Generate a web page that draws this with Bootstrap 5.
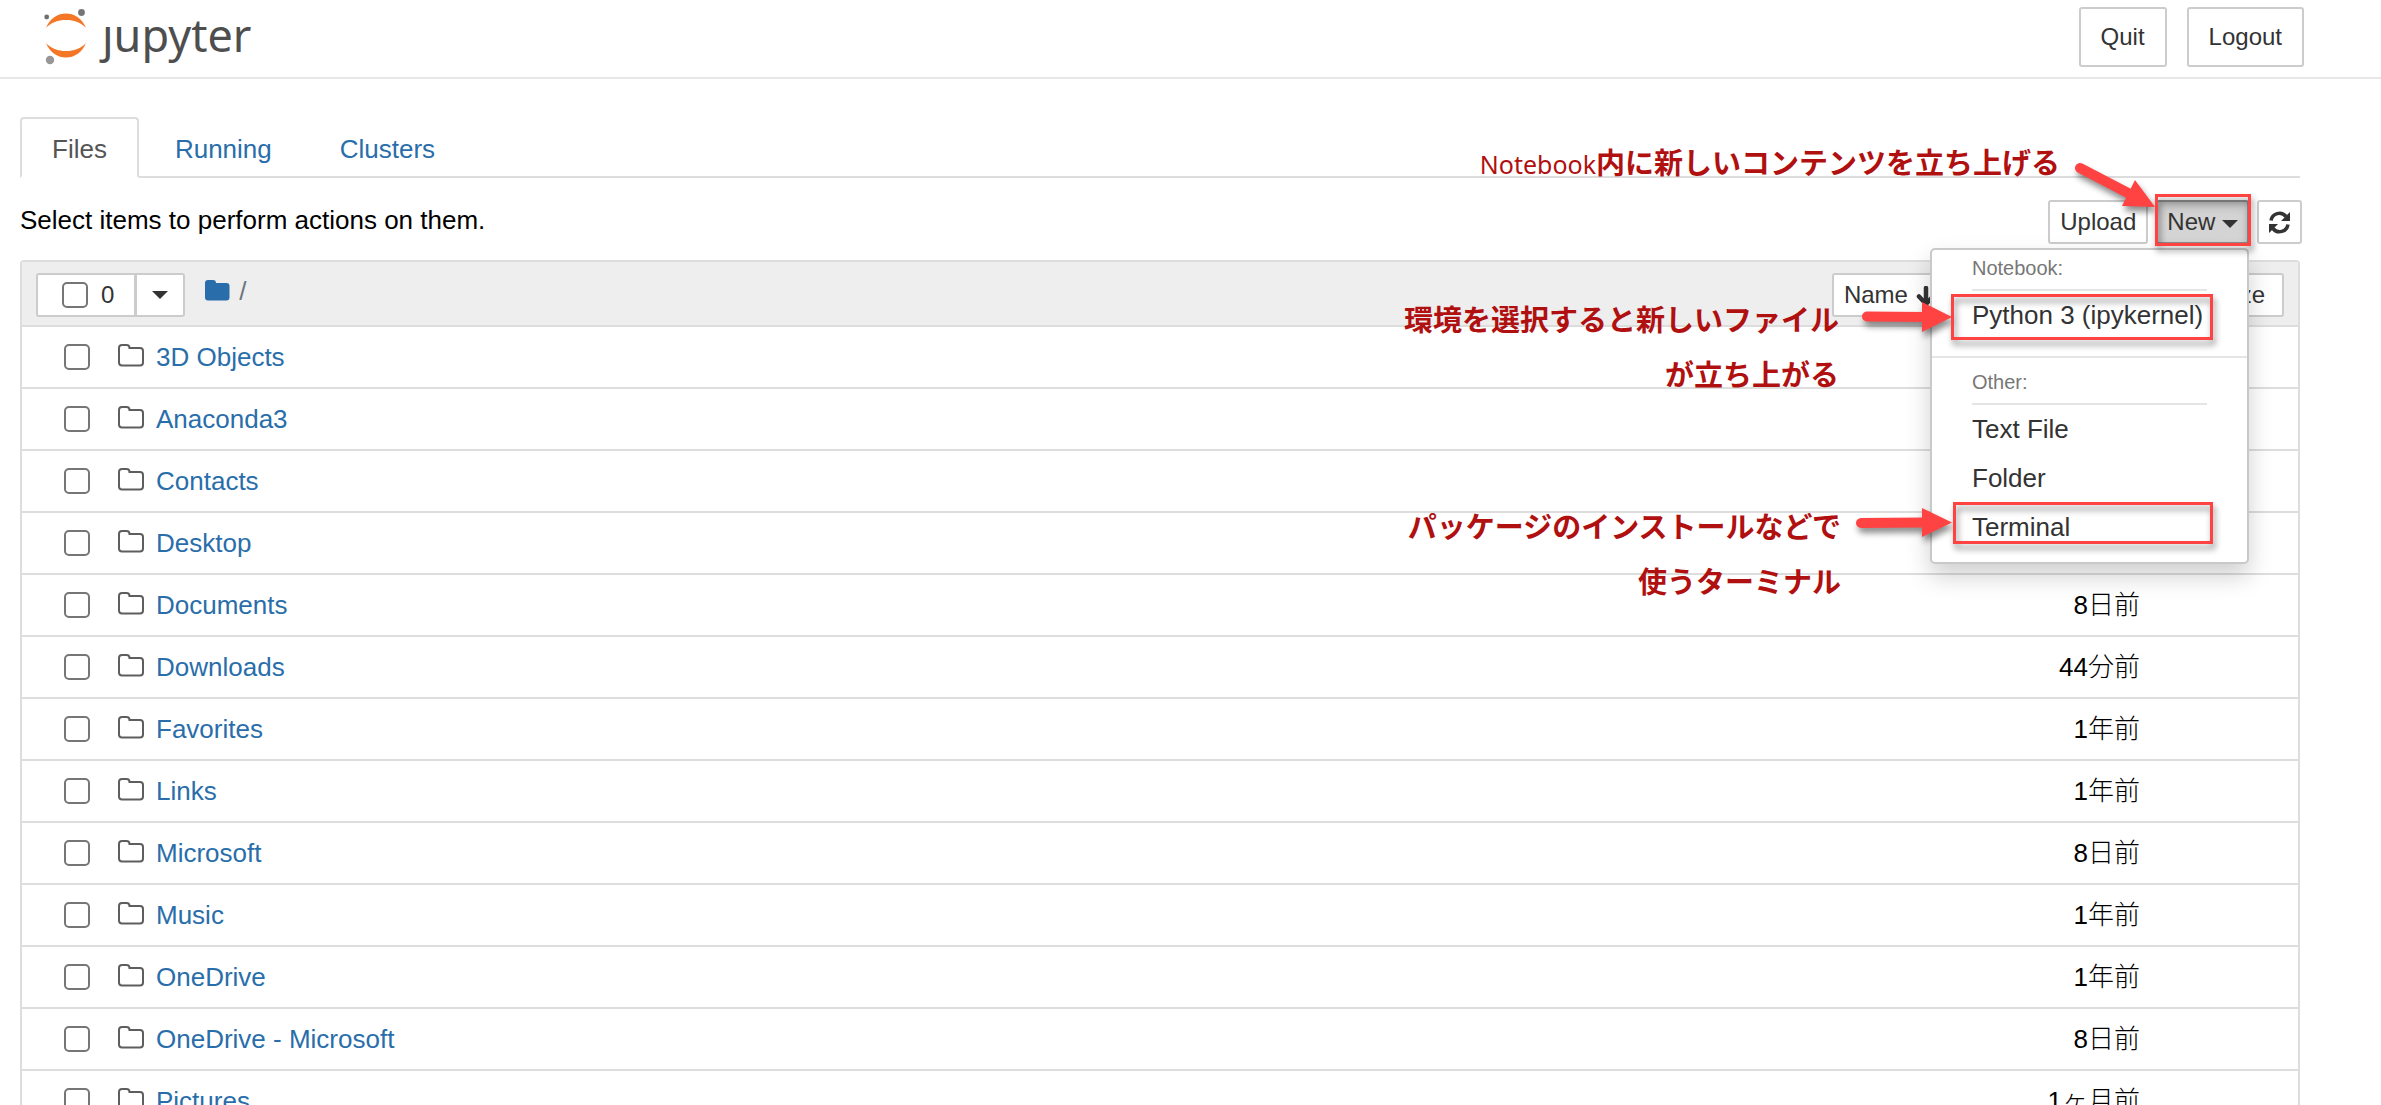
<!DOCTYPE html>
<html lang="ja">
<head>
<meta charset="utf-8">
<meta name="viewport" content="width=device-width, initial-scale=1">
<title>Home Page - Jupyter</title>
<link href="https://cdn.jsdelivr.net/npm/bootstrap@5.3.0/dist/css/bootstrap.min.css" rel="stylesheet">
<style>
  body { font: 26px/36px "Liberation Sans", "Noto Sans CJK JP", sans-serif; color: #000; background: #fff; height: 100vh; overflow: hidden; }
  a { color: #296eaa; text-decoration: none; }
  .site-head { padding: 7px 77px 10px 42px; border-bottom: 2px solid #e7e7e7; }
  .logo-word { font: 45px/56px "Noto Sans", sans-serif; color: #4e4e4e; margin-left: 2px; }
  .btn { --bs-btn-font-size: 24px; --bs-btn-line-height: 34px; --bs-btn-padding-x: 10px; --bs-btn-padding-y: 3px; --bs-btn-border-width: 2px; --bs-btn-border-radius: 3px;
    --bs-btn-color: #333; --bs-btn-bg: #fff; --bs-btn-border-color: #ccc; --bs-btn-hover-bg: #e6e6e6; --bs-btn-hover-border-color: #adadad; }
  .btn-head { --bs-btn-padding-x: 20px; --bs-btn-padding-y: 11px; }
  .btn-size { --bs-btn-padding-x: 17px; }
  .btn-open { --bs-btn-padding-x: 9px; --bs-btn-bg: #d4d4d4; --bs-btn-border-color: #8c8c8c; box-shadow: inset 0 6px 10px rgba(0,0,0,.125); }
  .btn-count { padding-left: 24px; padding-right: 20px; gap: 13px; }
  .btn-more { --bs-btn-padding-x: 15px; }
  .caret-mark { display: inline-block; border: 8px solid transparent; border-top-color: currentColor; border-bottom: 0; vertical-align: middle; }
  .page-main { padding: 38px 81px 0 20px; }
  .nav-tabs { --bs-nav-tabs-border-width: 2px; --bs-nav-tabs-border-color: #ddd; --bs-nav-tabs-border-radius: 4px; --bs-nav-link-padding-x: 30px; --bs-nav-link-color: #296eaa;
    --bs-nav-tabs-link-active-color: #555; --bs-nav-tabs-link-active-border-color: #ddd #ddd #fff; gap: 4px; }
  .nav-tabs .nav-link { padding-top: 12px; padding-bottom: 9px; }
  .tools { padding-top: 22px; margin-right: -2px; }
  .hint { padding-top: 2px; }
  .file-list { margin-top: 16px; border: 2px solid #ddd; border-radius: 4px; }
  .list-head { background: #eee; padding: 11px 14px 8px; border-bottom: 2px solid #ddd; }
  .file-row { padding: 12px 0 12px 42px; border-bottom: 2px solid #ddd; }
  .tick { appearance: none; width: 26px; height: 26px; border: 2px solid #767676; border-radius: 5px; background: #fff; margin: 0; flex: none; }
  .file-row .tick { margin-right: 28px; }
  .file-row svg { width: 26px; height: 24px; margin-right: 12px; margin-top: -5px; }
  .file-row span { font-weight: 300; }
  .size-col { width: 158px; }
  .name-sort { margin-right: 78px; }
  .new-menu { --bs-dropdown-font-size: 26px; --bs-dropdown-border-width: 2px; --bs-dropdown-border-radius: 5px; --bs-dropdown-border-color: #c9c9c9; --bs-dropdown-padding-y: 0;
    --bs-dropdown-item-padding-x: 40px; --bs-dropdown-item-padding-y: 6px; --bs-dropdown-link-color: #333; top: 100%; right: 0; width: 319px; margin-top: 4px; padding-bottom: 10px; box-shadow: 0 12px 24px rgba(0,0,0,.19); }
  .new-menu .dropdown-item { line-height: 37px; }
  .menu-label { font-size: 20px; line-height: 28px; color: #777; margin: 4px 40px 0; padding-bottom: 7px; border-bottom: 2px solid #e5e5e5; }
  .new-menu .dropdown-divider { margin: 16px 0 10px; border-top: 2px solid #e5e5e5; opacity: 1; }
  .note-layer { position: absolute; right: 81px; top: 0; width: 460px; height: 500px; z-index: 1100; pointer-events: none; filter: drop-shadow(2px 5px 3px rgba(0,0,0,.45)); }
  .note-text { position: absolute; z-index: 1100; margin: 0; text-align: right; white-space: nowrap; color: #b01010; font: 700 29px/55px "Noto Sans CJK JP", sans-serif; }
  .note-text span { font: 400 25px/55px "Noto Sans", sans-serif; }
  .note-new { right: 321px; top: 55px; }
  .note-env { right: 542px; top: 212px; }
  .note-term { right: 540px; top: 419px; }
</style>
<script src="https://cdn.jsdelivr.net/npm/bootstrap@5.3.0/dist/js/bootstrap.bundle.min.js"></script>
</head>
<body>
<svg class="d-none" aria-hidden="true">
  <symbol id="folder" viewBox="0 0 26 24"><path d="M1 5Q1 2 4 2H8.500Q11.500 2 11.500 5H22Q25 5 25 8V19.500Q25 22.500 22 22.500H4Q1 22.500 1 19.500Z" fill="none" stroke="#5e5e5e" stroke-width="2"/></symbol>
</svg>

<header class="site-head d-flex align-items-start">
  <a href="#" class="d-flex align-items-start me-auto" aria-label="jupyter">
    <svg width="58" height="60" viewBox="42 7 58 60" aria-hidden="true">
      <path d="M46 28C50 18 58 13.500 66 13.500S82 18 86 28C81 22.500 74 20 66 20S51 22.500 46 28Z" fill="#f37726"/>
      <path d="M46 43C50 53 58 57.500 66 57.500S82 53 86 43C81 48.500 74 51 66 51S51 48.500 46 43Z" fill="#f37726"/>
      <circle cx="81.500" cy="12.500" r="3.400" fill="#767677"/><circle cx="46.700" cy="17" r="2.400" fill="#6f6f70"/><circle cx="50" cy="60" r="4.200" fill="#989798"/>
    </svg>
    <span class="logo-word">ȷupyter</span>
  </a>
  <div class="d-flex">
    <button type="button" class="btn btn-head">Quit</button>
    <span class="ps-1 pe-3"></span>
    <button type="button" class="btn btn-head">Logout</button>
  </div>
</header>

<main class="page-main position-relative">
  <ul class="nav nav-tabs">
    <li class="nav-item"><a class="nav-link active" href="#">Files</a></li>
    <li class="nav-item"><a class="nav-link" href="#">Running</a></li>
    <li class="nav-item"><a class="nav-link" href="#">Clusters</a></li>
  </ul>

  <div class="tools d-flex align-items-start">
    <div class="me-auto hint">Select items to perform actions on them.</div>
    <div class="d-flex gap-2">
      <button type="button" class="btn">Upload</button>
      <div class="position-relative">
        <button type="button" class="btn btn-open" aria-expanded="true">New <span class="caret-mark"></span></button>
        <div class="dropdown-menu new-menu show">
          <div class="menu-label">Notebook:</div>
          <a class="dropdown-item" href="#">Python 3 (ipykernel)</a>
          <hr class="dropdown-divider">
          <div class="menu-label">Other:</div>
          <a class="dropdown-item" href="#">Text File</a>
          <a class="dropdown-item" href="#">Folder</a>
          <a class="dropdown-item" href="#">Terminal</a>
        </div>
      </div>
      <button type="button" class="btn" aria-label="Refresh">
        <svg class="d-block my-1" width="21" height="26" viewBox="0 0 21 26" aria-hidden="true"><g fill="none" stroke="#333" stroke-width="3.600"><path d="M2 11.500A8.500 8.500 0 0 1 17 7.500"/><path d="M19 15.500A8.500 8.500 0 0 1 4 19.500"/></g><path d="M21 3V12H12ZM0 24V15H9Z" fill="#333"/></svg>
      </button>
    </div>
  </div>

  <section class="file-list">
    <div class="list-head d-flex align-items-start">
      <div class="btn-group">
        <label class="btn btn-count d-flex align-items-center"><input class="tick" type="checkbox" aria-label="Select all"><span>0</span></label>
        <button type="button" class="btn btn-more" aria-label="Select menu"><span class="caret-mark d-block"></span></button>
      </div>
      <a href="#" class="ms-3 ps-1" aria-label="Home folder"><svg class="d-block mt-1" width="26" height="26" viewBox="0 0 26 26" aria-hidden="true"><path d="M0 6Q0 3 3 3H8Q11 3 11 6H21.500Q24.500 6 24.500 9V20.500Q24.500 23.500 21.500 23.500H3Q0 23.500 0 20.500Z" fill="#296eaa"/></svg></a>
      <span class="text-secondary ms-2">/</span>
      <button type="button" class="btn ms-auto name-sort">Name <svg width="20" height="22" viewBox="0 0 20 22" aria-hidden="true"><path d="M11 2V17M4 10.500L11 18L18 10.500" fill="none" stroke="#333" stroke-width="4.500" stroke-linecap="round"/></svg></button>
      <button type="button" class="btn me-2">Last Modified</button>
      <button type="button" class="btn btn-size">Size</button>
    </div>

    <div class="file-row d-flex align-items-center"><input class="tick" type="checkbox" aria-label="3D Objects"><svg><use href="#folder"/></svg><a href="#" class="me-auto">3D Objects</a></div>
    <div class="file-row d-flex align-items-center"><input class="tick" type="checkbox" aria-label="Anaconda3"><svg><use href="#folder"/></svg><a href="#" class="me-auto">Anaconda3</a></div>
    <div class="file-row d-flex align-items-center"><input class="tick" type="checkbox" aria-label="Contacts"><svg><use href="#folder"/></svg><a href="#" class="me-auto">Contacts</a></div>
    <div class="file-row d-flex align-items-center"><input class="tick" type="checkbox" aria-label="Desktop"><svg><use href="#folder"/></svg><a href="#" class="me-auto">Desktop</a></div>
    <div class="file-row d-flex align-items-center"><input class="tick" type="checkbox" aria-label="Documents"><svg><use href="#folder"/></svg><a href="#" class="me-auto">Documents</a><span>8日前</span><span class="size-col"></span></div>
    <div class="file-row d-flex align-items-center"><input class="tick" type="checkbox" aria-label="Downloads"><svg><use href="#folder"/></svg><a href="#" class="me-auto">Downloads</a><span>44分前</span><span class="size-col"></span></div>
    <div class="file-row d-flex align-items-center"><input class="tick" type="checkbox" aria-label="Favorites"><svg><use href="#folder"/></svg><a href="#" class="me-auto">Favorites</a><span>1年前</span><span class="size-col"></span></div>
    <div class="file-row d-flex align-items-center"><input class="tick" type="checkbox" aria-label="Links"><svg><use href="#folder"/></svg><a href="#" class="me-auto">Links</a><span>1年前</span><span class="size-col"></span></div>
    <div class="file-row d-flex align-items-center"><input class="tick" type="checkbox" aria-label="Microsoft"><svg><use href="#folder"/></svg><a href="#" class="me-auto">Microsoft</a><span>8日前</span><span class="size-col"></span></div>
    <div class="file-row d-flex align-items-center"><input class="tick" type="checkbox" aria-label="Music"><svg><use href="#folder"/></svg><a href="#" class="me-auto">Music</a><span>1年前</span><span class="size-col"></span></div>
    <div class="file-row d-flex align-items-center"><input class="tick" type="checkbox" aria-label="OneDrive"><svg><use href="#folder"/></svg><a href="#" class="me-auto">OneDrive</a><span>1年前</span><span class="size-col"></span></div>
    <div class="file-row d-flex align-items-center"><input class="tick" type="checkbox" aria-label="OneDrive - Microsoft"><svg><use href="#folder"/></svg><a href="#" class="me-auto">OneDrive - Microsoft</a><span>8日前</span><span class="size-col"></span></div>
    <div class="file-row d-flex align-items-center"><input class="tick" type="checkbox" aria-label="Pictures"><svg><use href="#folder"/></svg><a href="#" class="me-auto">Pictures</a><span>1ヶ月前</span><span class="size-col"></span></div>
  </section>

  <!-- call-outs: arrows and frames over the menu -->
  <svg class="note-layer" viewBox="1840 79 460 500" aria-hidden="true">
    <g stroke="#ff4242" fill="none">
      <g stroke-width="3"><rect x="2156.500" y="195.500" width="93" height="49"/><rect x="1952.500" y="295.500" width="259" height="43"/><rect x="1954.500" y="503.500" width="257" height="39"/></g>
      <g stroke-width="10" stroke-linecap="round"><path d="M2080 168L2128 193M1867 316.500L1924 317M1861 523L1924 522.500"/></g>
    </g>
    <path d="M2135 180L2155 207L2122 206ZM1922 302L1952 317L1922 332ZM1922 508L1952 522.500L1922 537Z" fill="#ff4242"/>
  </svg>
  <p class="note-text note-new"><span>Notebook</span>内に新しいコンテンツを立ち上げる</p>
  <p class="note-text note-env">環境を選択すると新しいファイル<br>が立ち上がる</p>
  <p class="note-text note-term">パッケージのインストールなどで<br>使うターミナル</p>
</main>
</body>
</html>
